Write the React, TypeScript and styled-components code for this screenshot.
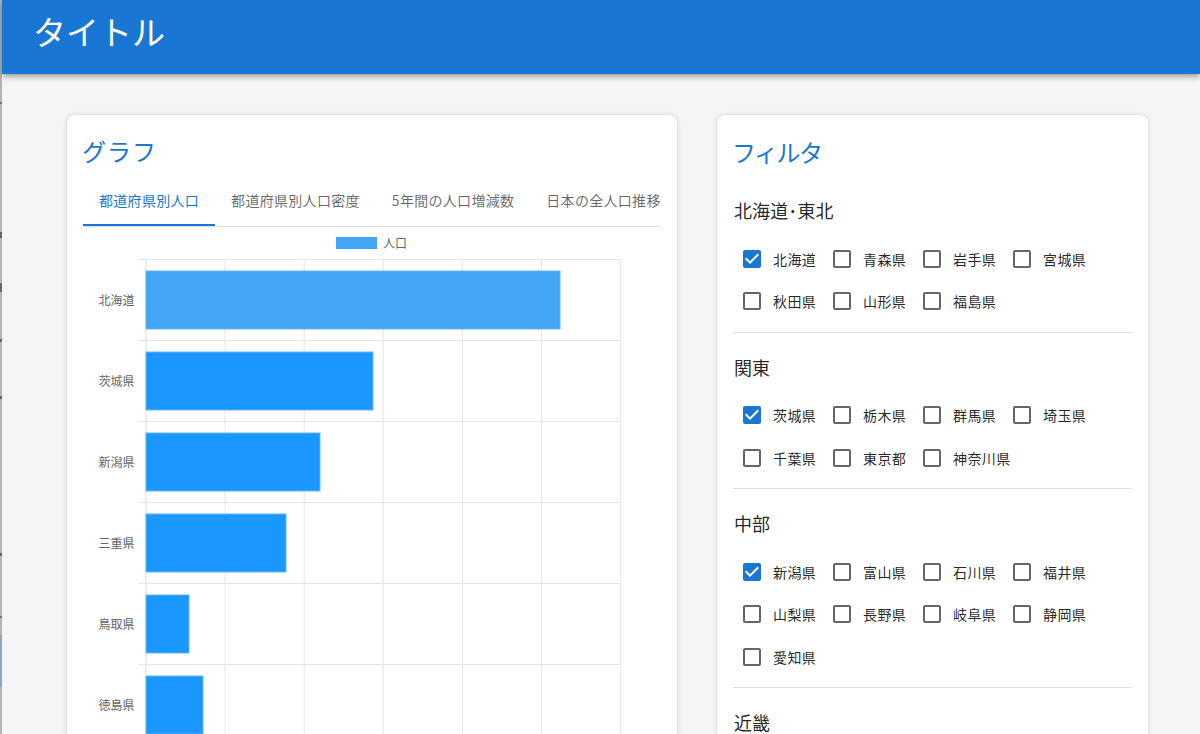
import React from "react";
import styled, { createGlobalStyle } from "styled-components";

const GlobalStyle = createGlobalStyle`
  html, body { margin: 0; padding: 0; height: 734px; overflow: hidden; background: #f5f5f5; }
  body { font-family: "Noto Sans CJK JP", "Noto Sans", sans-serif; }
  #root { height: 734px; }
`;

const Page = styled.div`
  display: flex;
  width: 1200px;
  height: 734px;
  overflow: hidden;
`;

const ScreenEdge = styled.div`
  flex: 0 0 2px;
  background: linear-gradient(
    to bottom,
    #b4b4b4 0, #b4b4b4 102px, #777 102px, #777 104px, #b4b4b4 104px,
    #b4b4b4 232px, #666 232px, #666 238px, #b4b4b4 238px,
    #b4b4b4 283px, #666 283px, #666 292px, #b4b4b4 292px,
    #b4b4b4 339px, #666 339px, #666 342px, #b4b4b4 342px,
    #b4b4b4 396px, #666 396px, #666 399px, #b4b4b4 399px,
    #b4b4b4 553px, #666 553px, #666 556px, #b4b4b4 556px,
    #b4b4b4 616px, #777 616px, #777 618px, #b4b4b4 618px,
    #b4b4b4 635px, #8fa6cc 635px, #8fa6cc 687px, #b4b4b4 687px
  );
`;

const Main = styled.div`
  flex: 1;
  min-width: 0;
  display: flex;
  flex-direction: column;
`;

const Header = styled.header`
  flex: 0 0 74px;
  box-sizing: border-box;
  padding-left: 31px;
  display: flex;
  align-items: center;
  background: #1976d2;
  box-shadow: 0 2px 4px -1px rgba(0,0,0,.2), 0 4px 5px 0 rgba(0,0,0,.14), 0 1px 10px 0 rgba(0,0,0,.12);
  position: relative;
  z-index: 1;
`;

const AppTitle = styled.h1`
  margin: -11px 0 0;
  color: #fff;
  font-size: 33px;
  font-weight: 400;
  line-height: 1.2;
`;

const Content = styled.main`
  display: grid;
  grid-template-columns: 610px 431px;
  column-gap: 40px;
  align-items: start;
  padding: 41px 0 0 65px;
`;

const Card = styled.section`
  background: #fff;
  border-radius: 8px;
  box-shadow: 0 0 4px rgba(0,0,0,.16);
  box-sizing: border-box;
  padding: 16px;
  height: 900px;
`;

const CardTitle = styled.h2`
  margin: 0 0 8px -1px;
  color: #1976d2;
  font-size: 24px;
  font-weight: 400;
  line-height: 40px;
  letter-spacing: 1px;
`;

const FilterTitle = styled(CardTitle)`
  margin-bottom: 23px;
  line-height: 42px;
  letter-spacing: -1.5px;
`;

const TabBar = styled.div`
  display: flex;
  height: 48px;
  box-sizing: border-box;
  border-bottom: 1px solid #e0e0e0;
`;

const Tab = styled.div<{ $active?: boolean }>`
  height: 47px;
  box-sizing: border-box;
  padding: 0 16px 5px;
  display: flex;
  align-items: center;
  white-space: nowrap;
  font-size: 14px;
  letter-spacing: 0.3px;
  color: ${(p) => (p.$active ? "#1976d2" : "rgba(0,0,0,.6)")};
  box-shadow: ${(p) => (p.$active ? "inset 0 -2px 0 #1976d2" : "none")};
`;

const Chart = styled.svg`
  display: block;
  margin-top: 5px;
  width: 578px;
  height: 560px;
  overflow: visible;
`;

const ChartLabel = styled.text`
  font-size: 12px;
  fill: #666;
`;

const FilterGroup = styled.div`
  padding-left: 1px;
`;

const GroupTitle = styled.h3`
  margin: 0 0 12.5px;
  font-size: 18px;
  font-weight: 400;
  line-height: 29px;
  letter-spacing: 0.1px;
  color: rgba(0,0,0,.87);
`;

const OptionList = styled.div`
  display: flex;
  flex-wrap: wrap;
  margin-left: -3px;
  width: 400px;
`;

const Option = styled.label`
  flex: 0 0 90px;
  height: 42.5px;
  display: flex;
  align-items: center;
  white-space: nowrap;
  font-size: 14px;
  letter-spacing: 0.4px;
  color: rgba(0,0,0,.87);
`;

const BoxIcon = styled.svg`
  flex: 0 0 24px;
  width: 24px;
  height: 24px;
  margin: 0 9px;
`;

const Divider = styled.hr`
  border: 0;
  height: 1px;
  background: #e0e0e0;
  margin: 9px 0 20px -1px;
`;

const pathOff = "M19 5v14H5V5h14m0-2H5c-1.1 0-2 .9-2 2v14c0 1.1.9 2 2 2h14c1.1 0 2-.9 2-2V5c0-1.1-.9-2-2-2z";
const pathOn = "M19 3H5c-1.11 0-2 .9-2 2v14c0 1.1.89 2 2 2h14c1.11 0 2-.9 2-2V5c0-1.1-.89-2-2-2zm-9 14l-5-5 1.41-1.41L10 14.17l7.59-7.59L19 8l-9 9z";

const groups = [
  { title: "北海道･東北", on: "北海道", items: ["北海道", "青森県", "岩手県", "宮城県", "秋田県", "山形県", "福島県"] },
  { title: "関東", on: "茨城県", items: ["茨城県", "栃木県", "群馬県", "埼玉県", "千葉県", "東京都", "神奈川県"] },
  { title: "中部", on: "新潟県", items: ["新潟県", "富山県", "石川県", "福井県", "山梨県", "長野県", "岐阜県", "静岡県", "愛知県"] },
  { title: "近畿", on: "三重県", items: ["三重県", "滋賀県", "京都府", "大阪府"] },
];

const bars = [
  { name: "北海道", w: 414, color: "#42a5f5" },
  { name: "茨城県", w: 227, color: "#1a98ff" },
  { name: "新潟県", w: 174, color: "#1a98ff" },
  { name: "三重県", w: 140, color: "#1a98ff" },
  { name: "鳥取県", w: 43, color: "#1a98ff" },
  { name: "徳島県", w: 57, color: "#1a98ff" },
];

const X0 = 63;
const Y0 = 27.5;
const STEP_Y = 81;
const STEP_X = 79.1;

const PopulationChart = () => (
  <Chart viewBox="0 0 578 560">
    <rect x="253" y="5" width="41" height="12" fill="#42a5f5" />
    <ChartLabel x="300" y="15.5">人口</ChartLabel>
    {[0, 1, 2, 3, 4, 5, 6].map((i) => (
      <line key={i} x1={X0 + i * STEP_X} x2={X0 + i * STEP_X} y1={Y0} y2={560} stroke={i === 0 ? "#d9d9d9" : "#e6e6e6"} />
    ))}
    {[0, 1, 2, 3, 4, 5, 6].map((i) => (
      <line key={i} x1={55} x2={X0 + 6 * STEP_X} y1={Y0 + i * STEP_Y} y2={Y0 + i * STEP_Y} stroke="#e6e6e6" />
    ))}
    {bars.map((b, i) => (
      <g key={b.name}>
        <rect x={X0} y={Y0 + 11.5 + i * STEP_Y} width={b.w} height={58} fill={b.color} stroke="#64b5f6" strokeWidth="1" />
        <ChartLabel x={51.5} y={Y0 + 45 + i * STEP_Y} textAnchor="end">{b.name}</ChartLabel>
      </g>
    ))}
  </Chart>
);

export default function App() {
  return (
    <Page>
      <GlobalStyle />
      <ScreenEdge />
      <Main>
        <Header>
          <AppTitle>タイトル</AppTitle>
        </Header>
        <Content>
          <Card>
            <CardTitle>グラフ</CardTitle>
            <TabBar>
              <Tab $active>都道府県別人口</Tab>
              <Tab>都道府県別人口密度</Tab>
              <Tab>5年間の人口増減数</Tab>
              <Tab>日本の全人口推移</Tab>
            </TabBar>
            <PopulationChart />
          </Card>
          <Card>
            <FilterTitle>フィルタ</FilterTitle>
            {groups.map((g, i) => (
              <FilterGroup key={g.title}>
                <GroupTitle>{g.title}</GroupTitle>
                <OptionList>
                  {g.items.map((name) => (
                    <Option key={name}>
                      <BoxIcon viewBox="0 0 24 24">
                        <path
                          d={name === g.on ? pathOn : pathOff}
                          fill={name === g.on ? "#1976d2" : "rgba(0,0,0,.6)"}
                        />
                      </BoxIcon>
                      {name}
                    </Option>
                  ))}
                </OptionList>
                {i < groups.length - 1 && <Divider />}
              </FilterGroup>
            ))}
          </Card>
        </Content>
      </Main>
    </Page>
  );
}
